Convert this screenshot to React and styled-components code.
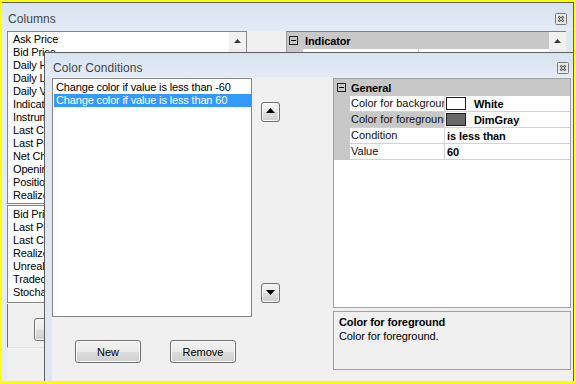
import React from 'react';
import styled, { createGlobalStyle } from 'styled-components';

const Global = createGlobalStyle`
  html, body { margin: 0; padding: 0; }
  body {
    font-family: "Liberation Sans", Arial, sans-serif;
    font-size: 11px;
    color: #000;
  }
  * { box-sizing: border-box; }
`;

const FRAME_BLUE = '#dfe7f2';
const GRID_GRAY = '#c8c8c8';
const LINE = '#d2d2d2';

const Frame = styled.div`
  width: 576px;
  height: 384px;
  background: #ffff00;
  padding: 2px 2px 3px 2px;
  overflow: hidden;
`;

const Desktop = styled.div`
  position: relative;
  width: 572px;
  height: 379px;
`;

const Window = styled.div`
  display: flex;
  flex-direction: column;
  background: ${FRAME_BLUE};
  border-top: 1px solid #5e5e5e;
  border-right: 1px solid #5e5e5e;
  border-left: ${p => (p.$front ? '1px solid #5e5e5e' : 'none')};
  overflow: hidden;
  ${p =>
    p.$front
      ? `position: absolute; left: 42px; top: 50px; width: 530px; bottom: 0;`
      : `width: 100%; height: 100%;`}
`;

const TitleBar = styled.div`
  display: flex;
  align-items: center;
  justify-content: space-between;
  flex: none;
  height: ${p => p.$h}px;
  padding: ${p => p.$pt}px ${p => p.$pr}px 0 ${p => p.$pl}px;
  background: linear-gradient(#d8e3f1, #e3ebf6);
`;

const Title = styled.span`
  font-size: 12px;
  color: #454545;
  letter-spacing: 0.05px;
`;

const CloseBtn = styled.span`
  display: flex;
  width: 12px;
  height: 12px;
`;

const CloseIcon = () => (
  <CloseBtn>
    <svg width="12" height="12" viewBox="0 0 12 12">
      <rect x="0.5" y="0.5" width="11" height="11" rx="1" fill="#e9e9e9" stroke="#7a7a7a" />
      <path d="M3.5 3.5l5 5M8.5 3.5l-5 5" stroke="#4a4a4a" strokeWidth="2.4" />
      <path d="M3.7 3.7l4.6 4.6M8.3 3.7l-4.6 4.6" stroke="#f2f2f2" strokeWidth="0.8" />
    </svg>
  </CloseBtn>
);

/* ---------- back window ---------- */

const BackBody = styled.div`
  flex: 1;
  display: flex;
  gap: 39px;
  background: #f0f0f0;
  border-left: 5px solid #e6ecf5;
  border-right: 7px solid ${FRAME_BLUE};
`;

const BackLeft = styled.div`
  width: 240px;
  display: flex;
  flex-direction: column;
  gap: 1px;
`;

const ListBox = styled.div`
  display: flex;
  height: ${p => p.$h}px;
  flex: none;
  background: #fff;
  border: 1px solid #858585;
  overflow: hidden;
`;

const ListItems = styled.div`
  flex: 1;
  display: flex;
  flex-direction: column;
  padding: ${p => p.$pad};
  min-width: 0;
`;

const ListItem = styled.div`
  height: 13px;
  line-height: 13px;
  padding-left: ${p => p.$indent}px;
  white-space: nowrap;
  letter-spacing: -0.15px;
  background: ${p => (p.$selected ? '#3399ff' : 'transparent')};
  color: ${p => (p.$selected ? '#fff' : '#000')};
`;

const ScrollBar = styled.div`
  width: 17px;
  flex: none;
  background: #ededed;
  display: flex;
  flex-direction: column;
`;

const ScrollBtn = styled.div`
  height: 17px;
  display: flex;
  align-items: center;
  justify-content: center;
  background: #f2f2f2;
`;

const SmallUp = () => (
  <svg width="7" height="4" viewBox="0 0 7 4">
    <path d="M0 4L3.5 0L7 4Z" fill="#3a3a3a" />
  </svg>
);

const BackFooter = styled.div`
  flex: none;
  height: 44px;
  border-left: 1px solid #6e6e6e;
  border-bottom: 1px solid #e4e4e4;
  padding: 14px 0 0 26px;
`;

const BackGrid = styled.div`
  width: 280px;
  display: flex;
  align-self: flex-start;
  height: 60px;
  border-top: 1px solid #7d7d7d;
  border-left: 1px solid #9a9a9a;
  background: #fff;
`;

const GridMain = styled.div`
  flex: 1;
  display: flex;
  flex-direction: column;
`;

/* ---------- front window ---------- */

const FrontBody = styled.div`
  flex: 1;
  display: flex;
  padding-top: 1px;
  background: #f0f0f0;
  border-left: 7px solid ${FRAME_BLUE};
  border-right: 2px solid #e8eef6;
`;

const LeftPane = styled.div`
  width: 200px;
  flex: none;
  display: flex;
  flex-direction: column;
`;

const ButtonRow = styled.div`
  display: flex;
  gap: 29px;
  margin-top: 23px;
  padding-left: 23px;
`;

const PushButton = styled.button`
  width: 66px;
  height: 23px;
  padding: 0;
  border: 1px solid #707070;
  border-radius: 3px;
  background: linear-gradient(#f2f2f2 0%, #ebebeb 50%, #dddddd 51%, #cfcfcf 100%);
  font-family: "Liberation Sans", Arial, sans-serif;
  font-size: 11px;
  color: #000;
  box-shadow: inset 0 0 0 1px #fcfcfc;
`;

const ArrowCol = styled.div`
  width: 81px;
  flex: none;
  display: flex;
  flex-direction: column;
  gap: 161px;
  padding: 24px 0 0 9px;
`;

const ArrowBtn = styled.div`
  width: 19px;
  height: 20px;
  border: 1px solid #707070;
  border-radius: 3px;
  background: linear-gradient(#f2f2f2 0%, #ebebeb 50%, #dddddd 51%, #cfcfcf 100%);
  box-shadow: inset 0 0 0 1px #fafafa;
  display: flex;
  justify-content: center;
  padding-top: ${p => p.$pt}px;
`;

const Tri = ({ down }) => (
  <svg width="9" height="5" viewBox="0 0 9 5">
    <path d={down ? 'M0 0H9L4.5 5Z' : 'M0 5L4.5 0L9 5Z'} fill="#000" />
  </svg>
);

const RightPane = styled.div`
  width: 238px;
  flex: none;
  display: flex;
  flex-direction: column;
  gap: 3px;
`;

const PropGrid = styled.div`
  height: 230px;
  border: 1px solid #a0a0a0;
  background: #fff;
  display: flex;
  flex-direction: column;
`;

const CategoryRow = styled.div`
  display: flex;
  align-items: center;
  height: ${p => p.$h}px;
  flex: none;
  background: ${GRID_GRAY};
  font-weight: bold;
  letter-spacing: -0.1px;
`;

const GlyphCell = styled.div`
  width: 16px;
  flex: none;
  display: flex;
  padding-left: ${p => p.$pl}px;
`;

const Glyph = () => (
  <svg width="9" height="9" viewBox="0 0 9 9">
    <rect x="0.5" y="0.5" width="8" height="8" fill="none" stroke="#222" />
    <path d="M2 4.5h5" stroke="#000" />
  </svg>
);

const CatLabel = styled.span`
  padding-left: ${p => p.$pl}px;
`;

const PropRow = styled.div`
  display: flex;
  height: 16px;
  flex: none;
`;

const Margin = styled.div`
  width: 16px;
  flex: none;
  background: ${GRID_GRAY};
`;

const NameCell = styled.div`
  width: ${p => p.$w}px;
  flex: none;
  border-right: 1px solid ${LINE};
  border-bottom: 1px solid ${LINE};
  background: ${p => (p.$selected ? GRID_GRAY : '#fff')};
  padding-left: 1px;
  line-height: 15px;
  white-space: nowrap;
  overflow: hidden;
  color: #111;
`;

const ValueCell = styled.div`
  flex: 1;
  display: flex;
  align-items: center;
  border-bottom: 1px solid ${LINE};
  padding-left: 2px;
  font-weight: bold;
  white-space: nowrap;
  letter-spacing: -0.1px;
`;

const Swatch = styled.span`
  width: 20px;
  height: 13px;
  flex: none;
  margin: 0 8px 0 -1px;
  border: 1px solid #1e1e1e;
  background: ${p => p.$color};
`;

const HelpPanel = styled.div`
  height: 59px;
  border: 1px solid #a0a0a0;
  background: #f0f0f0;
  padding: 3px 5px;
  line-height: 14px;
`;

const HelpTitle = styled.div`
  font-weight: bold;
  letter-spacing: -0.1px;
`;

const HelpText = styled.div`
  letter-spacing: -0.1px;
`;

const backList1 = [
  'Ask Price', 'Bid Price', 'Daily High', 'Daily Low', 'Daily Volume', 'Indicator',
  'Instrument', 'Last Close', 'Last Price', 'Net Change', 'Opening Price', 'Position', 'Realized P&L',
];
const backList2 = ['Bid Price', 'Last Price', 'Last Close', 'Realized P&L', 'Unrealized P&L', 'Traded Volume', 'Stochastics'];

const conditions = [
  'Change color if value is less than -60',
  'Change color if value is less than 60',
];

const props = [
  { name: 'Color for background', swatch: '#ffffff', value: 'White' },
  { name: 'Color for foreground', swatch: '#696969', value: 'DimGray', selected: true },
  { name: 'Condition', value: 'is less than' },
  { name: 'Value', value: '60' },
];

export default function App() {
  return (
    <>
      <Global />
      <Frame>
        <Desktop>
          <Window>
            <TitleBar $h={28} $pt={4} $pr={6} $pl={6}>
              <Title>Columns</Title>
              <CloseIcon />
            </TitleBar>
            <BackBody>
              <BackLeft>
                <ListBox $h={173}>
                  <ListItems $pad="1px 0 0 0">
                    {backList1.map(t => (
                      <ListItem key={t} $indent={5}>{t}</ListItem>
                    ))}
                  </ListItems>
                  <ScrollBar>
                    <ScrollBtn><SmallUp /></ScrollBtn>
                  </ScrollBar>
                </ListBox>
                <ListBox $h={98}>
                  <ListItems $pad="2px 0 0 0">
                    {backList2.map(t => (
                      <ListItem key={t} $indent={5}>{t}</ListItem>
                    ))}
                  </ListItems>
                </ListBox>
                <BackFooter>
                  <PushButton>OK</PushButton>
                </BackFooter>
              </BackLeft>
              <BackGrid>
                <GridMain>
                  <CategoryRow $h={17}>
                    <GlyphCell $pl={2}><Glyph /></GlyphCell>
                    <CatLabel $pl={2}>Indicator</CatLabel>
                  </CategoryRow>
                  <PropRow>
                    <Margin />
                    <NameCell $w={116} />
                    <ValueCell />
                  </PropRow>
                </GridMain>
                <ScrollBar>
                  <ScrollBtn><SmallUp /></ScrollBtn>
                </ScrollBar>
              </BackGrid>
            </BackBody>
          </Window>

          <Window $front>
            <TitleBar $h={24} $pt={6} $pr={4} $pl={8}>
              <Title>Color Conditions</Title>
              <CloseIcon />
            </TitleBar>
            <FrontBody>
              <LeftPane>
                <ListBox $h={239}>
                  <ListItems $pad="2px 0 0 1px">
                    {conditions.map((t, i) => (
                      <ListItem key={t} $indent={2} $selected={i === 1}>{t}</ListItem>
                    ))}
                  </ListItems>
                </ListBox>
                <ButtonRow>
                  <PushButton>New</PushButton>
                  <PushButton>Remove</PushButton>
                </ButtonRow>
              </LeftPane>
              <ArrowCol>
                <ArrowBtn $pt={5}><Tri /></ArrowBtn>
                <ArrowBtn $pt={6}><Tri down /></ArrowBtn>
              </ArrowCol>
              <RightPane>
                <PropGrid>
                  <CategoryRow $h={17}>
                    <GlyphCell $pl={3}><Glyph /></GlyphCell>
                    <CatLabel $pl={1}>General</CatLabel>
                  </CategoryRow>
                  {props.map(p => (
                    <PropRow key={p.name}>
                      <Margin />
                      <NameCell $w={95} $selected={p.selected}>{p.name}</NameCell>
                      <ValueCell>
                        {p.swatch && <Swatch $color={p.swatch} />}
                        {p.value}
                      </ValueCell>
                    </PropRow>
                  ))}
                </PropGrid>
                <HelpPanel>
                  <HelpTitle>Color for foreground</HelpTitle>
                  <HelpText>Color for foreground.</HelpText>
                </HelpPanel>
              </RightPane>
            </FrontBody>
          </Window>
        </Desktop>
      </Frame>
    </>
  );
}
